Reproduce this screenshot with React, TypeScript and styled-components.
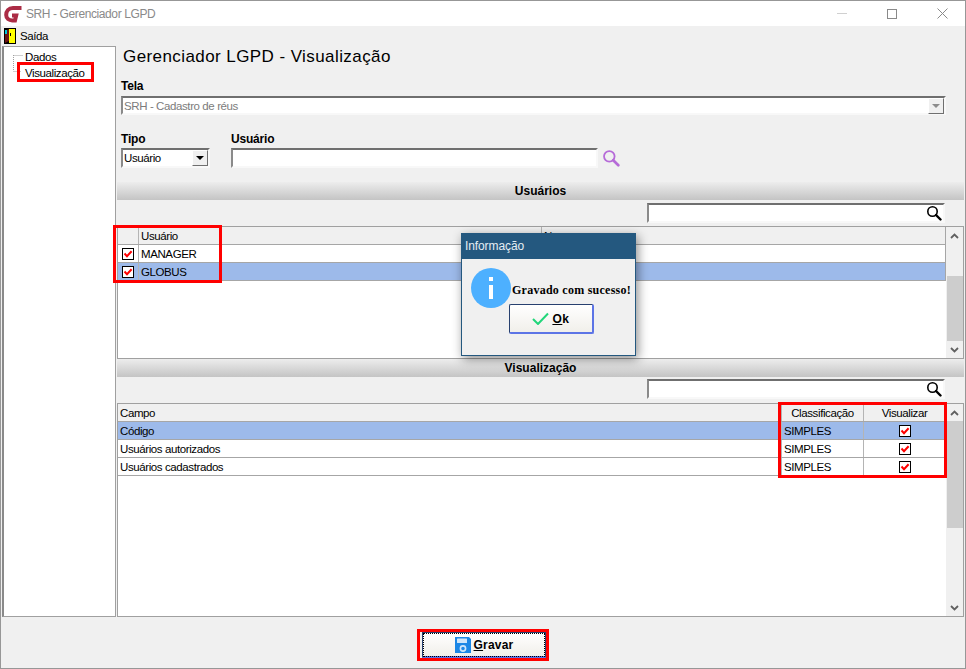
import React from 'react';
import styled, { createGlobalStyle } from 'styled-components';

const GlobalStyle = createGlobalStyle`
  html, body { margin: 0; padding: 0; background: #f0f0f0; }
  body {
    font-family: "Liberation Sans", Arial, sans-serif;
    font-size: 11.5px;
    letter-spacing: -0.4px;
    color: #000;
  }
  * { box-sizing: border-box; }
`;

const Page = styled.div`
  position: relative;
  width: 966px;
  height: 669px;
  overflow: hidden;
`;

const Window = styled.div`
  display: flex;
  flex-direction: column;
  width: 966px;
  height: 669px;
  border: 1px solid #979797;
  background: #f0f0f0;
`;

const TitleBar = styled.div`
  display: flex;
  align-items: center;
  height: 25px;
  flex: none;
  background: #fff;
  color: #8a8a8a;
  padding-left: 3px;
  gap: 4px;
`;

const TitleText = styled.span`
  flex: 1;
  font-size: 12px;
  letter-spacing: -0.4px;
`;

const WinButton = styled.div`
  display: flex;
  align-items: center;
  justify-content: center;
  width: 46px;
  height: 25px;
`;

const MenuBar = styled.div`
  display: flex;
  align-items: center;
  height: 20px;
  flex: none;
  padding-left: 3px;
  gap: 4px;
`;

const Body = styled.div`
  display: flex;
  flex: 1;
  min-height: 0;
`;

const Tree = styled.div`
  position: relative;
  width: 114px;
  margin-left: 1px;
  flex: none;
  background: #fff;
  border: 1px solid #a0a0a0;
  border-left: 2px solid #8a8a8a;
  padding: 2px 0 0 21px;
`;

const TreeLines = styled.svg`
  position: absolute;
  left: 9px;
  top: 8px;
`;

const TreeItem = styled.div`
  height: 16px;
  line-height: 16px;
  white-space: nowrap;
`;

const Main = styled.div`
  flex: 1;
  min-width: 0;
  display: flex;
  flex-direction: column;
  padding-left: 1px;
`;

const Heading = styled.div`
  height: 20px;
  margin-left: 6px;
  font-size: 17px;
  line-height: 22px;
  letter-spacing: 0.42px;
`;

const Form = styled.div`
  padding: 0 19px 0 4px;
`;

const Label = styled.div`
  height: 14px;
  line-height: 14px;
  font-weight: bold;
  font-size: 12px;
  letter-spacing: -0.2px;
`;

const TelaLabel = styled(Label)`
  margin-top: 13px;
  margin-bottom: 3px;
`;

const Sunken = styled.div`
  display: flex;
  align-items: center;
  height: ${p => p.$h ?? 20}px;
  width: ${p => (p.$w ? `${p.$w}px` : 'auto')};
  background: #fff;
  border-top: 2px solid #6f6f6f;
  border-left: 2px solid #8a8a8a;
  border-right: 2px solid #f8f8f8;
  border-bottom: 2px solid #f8f8f8;
  padding-left: 1px;
`;

const ComboValue = styled.span`
  flex: 1;
  white-space: nowrap;
  color: ${p => (p.$muted ? '#7c7c7c' : '#000')};
`;

const DropButton = styled.div`
  display: flex;
  align-items: center;
  justify-content: center;
  width: 16px;
  height: 16px;
  background: #f0f0f0;
  border-right: 1px solid #6f6f6f;
  border-bottom: 1px solid #6f6f6f;
  border-top: 1px solid #fff;
  border-left: 1px solid #fff;
`;

const DropArrow = styled.div`
  width: 0;
  height: 0;
  border-left: 4px solid transparent;
  border-right: 4px solid transparent;
  border-top: 4px solid ${p => (p.$muted ? '#8c8c8c' : '#000')};
`;

const FilterRow = styled.div`
  display: flex;
  margin-top: 17px;
  gap: 21px;
`;

const Field = styled.div`
  display: flex;
  flex-direction: column;
  gap: 2px;
`;

const InlineField = styled.div`
  display: flex;
  align-items: center;
  gap: 4px;
`;

const SectionBar = styled.div`
  height: 18px;
  flex: none;
  margin-right: 1px;
  margin-top: ${p => p.$top ?? 0}px;
  text-align: center;
  font-size: 12px;
  font-weight: bold;
  letter-spacing: 0;
  line-height: 18px;
  background: linear-gradient(#ededed, #c4c4c4);
`;

const SearchRow = styled.div`
  display: flex;
  justify-content: flex-end;
  margin: ${p => p.$top}px 20px 0 0;
`;

const SearchBox = styled(Sunken)`
  justify-content: flex-end;
  padding-right: 1px;
`;

const GridFrame = styled.div`
  display: flex;
  height: ${p => p.$h}px;
  flex: none;
  margin-top: ${p => p.$top}px;
  margin-right: 1px;
  border: 1px solid #a0a0a0;
  background: #fff;
`;

const GridBody = styled.div`
  flex: 1;
  min-width: 0;
`;

const GridRow = styled.div`
  display: grid;
  grid-template-columns: ${p => p.$cols};
  height: 18px;
  border-bottom: 1px solid #a6a6a6;
  border-right: 1px solid #a6a6a6;
  background: ${p => (p.$header ? '#f0f0f0' : p.$selected ? '#9dbaea' : '#fff')};
`;

const Cell = styled.div`
  display: flex;
  align-items: center;
  justify-content: ${p => (p.$center ? 'center' : 'flex-start')};
  padding-left: ${p => (p.$center ? 0 : 2)}px;
  border-right: ${p => (p.$last ? 'none' : '1px solid #b4b4b4')};
  overflow: hidden;
  white-space: nowrap;
`;

const Scrollbar = styled.div`
  display: flex;
  flex-direction: column;
  width: 17px;
  flex: none;
  background: #f0f0f0;
`;

const ScrollArrow = styled.div`
  display: flex;
  align-items: center;
  justify-content: center;
  height: 17px;
  flex: none;
`;

const ScrollTrack = styled.div`
  flex: 1;
  padding: ${p => p.$gap}px 0 0 1px;
`;

const ScrollThumb = styled.div`
  height: ${p => p.$h}px;
  background: #cdcdcd;
`;

const Footer = styled.div`
  height: 51px;
  flex: none;
  display: flex;
  justify-content: center;
  align-items: flex-start;
  padding: 15px 0 0 0;
`;

const SaveButton = styled.button`
  display: flex;
  align-items: center;
  justify-content: center;
  gap: 3px;
  width: 124px;
  height: 26px;
  margin-left: 2px;
  padding: 0;
  font-family: "Liberation Sans", Arial, sans-serif;
  font-weight: bold;
  font-size: 12px;
  letter-spacing: 0.2px;
  background: linear-gradient(#fff, #f1efea);
  border: 1px solid #27406f;
  border-bottom: 2px solid #5c74e6;
  outline: 1px dotted #000;
  outline-offset: -2px;
`;

const Underlined = styled.span`
  text-decoration: underline;
`;

const Highlight = styled.div`
  position: absolute;
  left: ${p => p.$x}px;
  top: ${p => p.$y}px;
  width: ${p => p.$w}px;
  height: ${p => p.$h}px;
  border: 3px solid #f00;
  pointer-events: none;
`;

const Dialog = styled.div`
  position: absolute;
  left: 461px;
  top: 233px;
  width: 175px;
  height: 123px;
  background: #f0f0f0;
  border: 1px solid #24587f;
  box-shadow: 2px 3px 10px rgba(0, 0, 0, 0.45);
`;

const DialogTitle = styled.div`
  height: 25px;
  background: #24587f;
  color: #e4edf3;
  line-height: 25px;
  padding-left: 3px;
  font-size: 12px;
  letter-spacing: -0.1px;
`;

const DialogBody = styled.div`
  display: flex;
  align-items: center;
  margin-top: 9px;
  padding-left: 9px;
  height: 40px;
`;

const InfoCircle = styled.div`
  display: flex;
  align-items: center;
  justify-content: center;
  width: 40px;
  height: 40px;
  flex: none;
  border-radius: 50%;
  background: #4db0ff;
`;

const DialogText = styled.span`
  margin-left: 1px;
  margin-top: 5px;
  font-family: "Liberation Serif", "Times New Roman", serif;
  font-weight: bold;
  font-size: 12px;
  letter-spacing: 0.25px;
  white-space: nowrap;
`;

const DialogActions = styled.div`
  display: flex;
  margin: -4px 0 0 47px;
`;

const OkButton = styled.button`
  display: flex;
  align-items: center;
  justify-content: center;
  gap: 3px;
  width: 85px;
  height: 30px;
  padding: 0;
  font-family: "Liberation Sans", Arial, sans-serif;
  font-weight: bold;
  font-size: 12px;
  letter-spacing: 0.6px;
  background: linear-gradient(#fff, #f1efea);
  border: 1px solid #27406f;
  border-bottom: 2px solid #5c74e6;
  border-right: 2px solid #5c74e6;
  border-radius: 2px;
`;

const Check = () => (
  <svg width="12" height="12" viewBox="0 0 12 12">
    <rect x="0.5" y="0.5" width="11" height="11" fill="#fff" stroke="#000" />
    <path d="M2.5 5.5 L5 8.2 L9.6 3.2" fill="none" stroke="#f00" strokeWidth="2" />
  </svg>
);

const Logo = () => (
  <svg width="18" height="18" viewBox="0 0 18 18">
    <path
      d="M17.5 3 H9 C4.6 3 2.2 6.4 2.2 10 C2.2 13.6 5 15.4 8.2 15.4 H11 L12.2 10.4 H8"
      fill="none"
      stroke="#ab2c45"
      strokeWidth="4"
    />
  </svg>
);

const ExitIcon = () => (
  <svg width="12" height="16" viewBox="0 0 12 16">
    <rect x="0" y="0" width="12" height="16" fill="#000" />
    <rect x="5" y="1" width="6" height="14" fill="#ffff00" />
    <path d="M1 3 L5 1 L5 13 L1 15 Z" fill="#6d1414" />
    <rect x="6" y="5" width="1" height="3" fill="#000" />
    <rect x="1" y="2" width="2" height="4" fill="#00c8d8" />
  </svg>
);

const SearchGlyph = ({ color = '#000', size = 16 }: { color?: string; size?: number }) => (
  <svg width={size} height={size} viewBox="0 0 16 16">
    <circle cx="6.5" cy="6.5" r="4.7" fill="none" stroke={color} strokeWidth="1.6" />
    <path d="M10 10 L14.5 14.5" stroke={color} strokeWidth="2.4" strokeLinecap="round" />
  </svg>
);

const Chevron = ({ down }: { down?: boolean }) => (
  <svg width="9" height="6" viewBox="0 0 9 6">
    <path
      d={down ? 'M1 1 L4.5 4.5 L8 1' : 'M1 5 L4.5 1.5 L8 5'}
      fill="none"
      stroke="#606060"
      strokeWidth="1.8"
    />
  </svg>
);

const FloppyIcon = () => (
  <svg width="16" height="16" viewBox="0 0 16 16">
    <path d="M0 0 H14 L16 2 V16 H0 Z" fill="#1b87e6" />
    <rect x="2" y="1.5" width="10" height="4.5" rx="0.5" fill="#cfe6fa" />
    <circle cx="8" cy="11.5" r="2.6" fill="none" stroke="#cfe6fa" strokeWidth="1.6" />
  </svg>
);

const GridScrollbar = ({ gap, thumb }: { gap: number; thumb: number }) => (
  <Scrollbar>
    <ScrollArrow>
      <Chevron />
    </ScrollArrow>
    <ScrollTrack $gap={gap}>
      <ScrollThumb $h={thumb} />
    </ScrollTrack>
    <ScrollArrow>
      <Chevron down />
    </ScrollArrow>
  </Scrollbar>
);

const userCols = '21px 403px 1fr';
const fieldCols = '664px 82px 1fr';

const users = [
  { name: 'MANAGER', selected: false },
  { name: 'GLOBUS', selected: true },
];

const fields = [
  { name: 'Código', selected: true },
  { name: 'Usuários autorizados', selected: false },
  { name: 'Usuários cadastrados', selected: false },
];

const App: React.FC = () => {
  return (
    <Page>
      <GlobalStyle />
      <Window>
        <TitleBar>
          <Logo />
          <TitleText>SRH - Gerenciador LGPD</TitleText>
          <WinButton>
            <svg width="10" height="1"><rect width="10" height="1" fill="#d0d0d0" /></svg>
          </WinButton>
          <WinButton>
            <svg width="10" height="10"><rect x="0.5" y="0.5" width="9" height="9" fill="none" stroke="#8a8a8a" /></svg>
          </WinButton>
          <WinButton>
            <svg width="11" height="11"><path d="M0.5 0.5 L10.5 10.5 M10.5 0.5 L0.5 10.5" stroke="#8a8a8a" /></svg>
          </WinButton>
        </TitleBar>
        <MenuBar>
          <ExitIcon />
          <span>Saída</span>
        </MenuBar>
        <Body>
          <Tree>
            <TreeLines width="12" height="24">
              <path d="M0.5 0 V16 M0.5 0.5 H10 M0.5 16.5 H8" stroke="#a0a0a0" strokeDasharray="1 1" fill="none" />
            </TreeLines>
            <TreeItem>Dados</TreeItem>
            <TreeItem>Visualização</TreeItem>
          </Tree>
          <Main>
            <Heading>Gerenciador LGPD - Visualização</Heading>
            <Form>
              <TelaLabel>Tela</TelaLabel>
              <Sunken $h={19}>
                <ComboValue $muted>SRH - Cadastro de réus</ComboValue>
                <DropButton>
                  <DropArrow $muted />
                </DropButton>
              </Sunken>
              <FilterRow>
                <Field>
                  <Label>Tipo</Label>
                  <Sunken $w={89}>
                    <ComboValue>Usuário</ComboValue>
                    <DropButton>
                      <DropArrow />
                    </DropButton>
                  </Sunken>
                </Field>
                <Field>
                  <Label>Usuário</Label>
                  <InlineField>
                    <Sunken $w={367} />
                    <SearchGlyph color="#b66bd8" size={18} />
                  </InlineField>
                </Field>
              </FilterRow>
            </Form>
            <SectionBar $top={14}>Usuários</SectionBar>
            <SearchRow $top={3}>
              <SearchBox $w={298}>
                <SearchGlyph />
              </SearchBox>
            </SearchRow>
            <GridFrame $top={3} $h={133}>
              <GridBody>
                <GridRow $header $cols={userCols}>
                  <Cell />
                  <Cell>Usuário</Cell>
                  <Cell $last>Nome</Cell>
                </GridRow>
                {users.map(user => (
                  <GridRow key={user.name} $cols={userCols} $selected={user.selected}>
                    <Cell $center>
                      <Check />
                    </Cell>
                    <Cell>{user.name}</Cell>
                    <Cell $last />
                  </GridRow>
                ))}
              </GridBody>
              <GridScrollbar gap={32} thumb={65} />
            </GridFrame>
            <SectionBar>Visualização</SectionBar>
            <SearchRow $top={2}>
              <SearchBox $w={298}>
                <SearchGlyph />
              </SearchBox>
            </SearchRow>
            <GridFrame $top={4} $h={214}>
              <GridBody>
                <GridRow $header $cols={fieldCols}>
                  <Cell>Campo</Cell>
                  <Cell $center>Classificação</Cell>
                  <Cell $center $last>Visualizar</Cell>
                </GridRow>
                {fields.map(field => (
                  <GridRow key={field.name} $cols={fieldCols} $selected={field.selected}>
                    <Cell>{field.name}</Cell>
                    <Cell>SIMPLES</Cell>
                    <Cell $center $last>
                      <Check />
                    </Cell>
                  </GridRow>
                ))}
              </GridBody>
              <GridScrollbar gap={0} thumb={107} />
            </GridFrame>
          </Main>
        </Body>
        <Footer>
          <SaveButton>
            <FloppyIcon />
            <span>
              <Underlined>G</Underlined>ravar
            </span>
          </SaveButton>
        </Footer>
      </Window>

      <Highlight $x={17} $y={62} $w={77} $h={20} />
      <Highlight $x={113} $y={225} $w={109} $h={58} />
      <Highlight $x={778} $y={402} $w={169} $h={76} />
      <Highlight $x={417} $y={629} $w={132} $h={32} />

      <Dialog>
        <DialogTitle>Informação</DialogTitle>
        <DialogBody>
          <InfoCircle>
            <svg width="6" height="22" viewBox="0 0 6 22">
              <rect x="1" y="0" width="4" height="4" fill="#fff" />
              <rect x="1" y="8" width="4" height="14" fill="#fff" />
            </svg>
          </InfoCircle>
          <DialogText>Gravado com sucesso!</DialogText>
        </DialogBody>
        <DialogActions>
          <OkButton>
            <svg width="17" height="13" viewBox="0 0 17 13">
              <path d="M1 7 L6 12 L16 1.5" fill="none" stroke="#22d67a" strokeWidth="2" />
            </svg>
            <span>
              <Underlined>O</Underlined>k
            </span>
          </OkButton>
        </DialogActions>
      </Dialog>
    </Page>
  );
};

export default App;
